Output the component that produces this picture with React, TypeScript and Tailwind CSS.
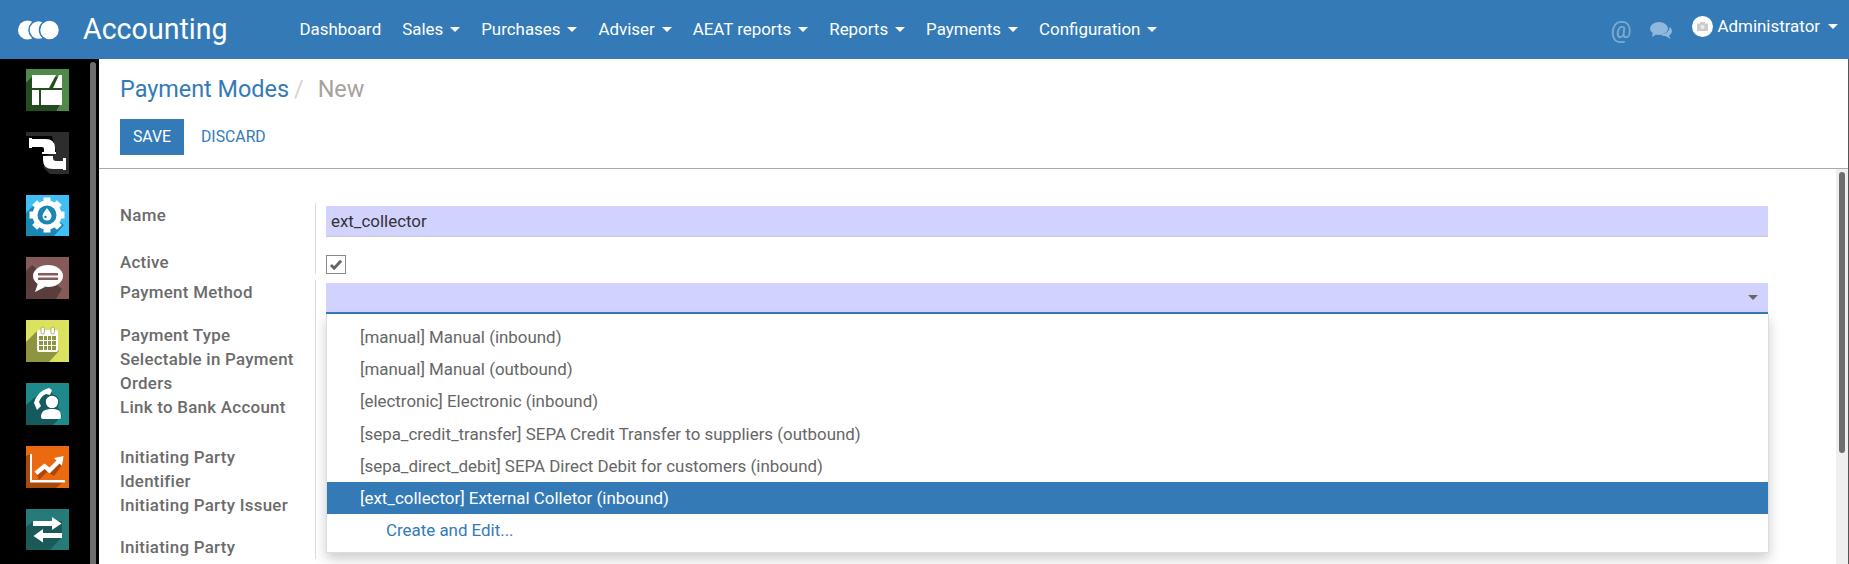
import React from "react";

const FONT = "font-['Roboto',sans-serif]";

function Caret({ className = "border-t-white" }: { className?: string }) {
  return <span className={`inline-block w-0 h-0 border-x-[5px] border-x-transparent border-t-[5px] ${className}`} />;
}

function NavItem({ label, caret = true }: { label: string; caret?: boolean }) {
  return (
    <a className="flex items-center gap-[7px] px-[10.5px] text-white text-[16.9px] whitespace-nowrap">
      <span>{label}</span>
      {caret && <Caret />}
    </a>
  );
}

function Tile({ bg, shade, children }: { bg: string; shade: string; children: React.ReactNode }) {
  return (
    <svg width="43" height="42" viewBox="0 0 43 42" className="block">
      <rect width="43" height="42" fill={bg} />
      <polygon points="6,8 6,8 36,32 30,42 0,42 0,14" fill={shade} />
      {children}
    </svg>
  );
}

function SidebarIcons() {
  return (
    <div className="flex flex-col gap-[21px] pl-[26px] pt-[10px]">
      <Tile bg="#4f8a4b" shade="#1f4a1c">
        <polygon points="0,14 6,8 36,8 36,30 30,42 0,42" fill="#234d1f" />
        <polygon points="6,6 30,6 23,19 6,19" fill="#fff" />
        <polygon points="33,6 36,6 36,19 27,19" fill="#fff" />
        <rect x="6" y="21" width="7" height="15" fill="#fff" />
        <rect x="15" y="21" width="21" height="15" fill="#fff" />
      </Tile>
      <svg width="43" height="42" viewBox="0 0 43 42" className="block">
        <rect width="43" height="42" fill="#2d2d2d" />
        <polygon points="0,4 26,4 30,20 18,24 18,36 24,42 0,42" fill="#000" />
        <path d="M5 7h15q8 0 9 8v5H18v-3q0-2-2-2H5z" fill="#fff" />
        <rect x="3" y="6" width="3" height="10" fill="#fff" />
        <rect x="16" y="20" width="14" height="2" fill="#fff" />
        <path d="M17 24h10v2q0 3 3 3h8v8H27q-10 0-10-9z" fill="#fff" />
        <rect x="37" y="26" width="3" height="12" fill="#fff" />
      </svg>
      <svg width="43" height="41" viewBox="0 0 43 41" className="block">
        <rect width="43" height="41" fill="#40bff5" />
        <polygon points="8,10 38,30 28,41 0,41 0,18" fill="#1a86b3" />
        <g fill="#fff">
          <circle cx="21" cy="20" r="14.5" />
          {[0, 45, 90, 135, 180, 225, 270, 315].map((a) => (
            <rect key={a} x="17.5" y="2.5" width="7" height="6" transform={`rotate(${a} 21 20)`} />
          ))}
        </g>
        <circle cx="21" cy="20" r="9.5" fill="#1a86b3" />
        <path d="M21 13c3 4 4.5 6 4.5 8a4.5 4.5 0 0 1-9 0c0-2 1.500-4 4.500-8z" fill="#fff" />
        <circle cx="19.500" cy="22" r="1.200" fill="#1a86b3" />
      </svg>
      <Tile bg="#875a5a" shade="#5c3d3d">
        <polygon points="7,18 20,8 37,20 18,42 0,42 0,24" fill="#5c3d3d" />
        <ellipse cx="22" cy="19" rx="15" ry="11" fill="#fff" />
        <path d="M12 26l-3 9 10-5z" fill="#fff" />
        <rect x="12" y="16" width="20" height="2.500" fill="#875a5a" />
        <rect x="12" y="20.500" width="20" height="2.500" fill="#875a5a" />
      </Tile>
      <svg width="43" height="42" viewBox="0 0 43 42" className="block">
        <rect width="43" height="42" fill="#dbe25f" />
        <polygon points="11,11 33,31 23,42 0,42 0,22" fill="#8f9440" />
        <rect x="11" y="10" width="21" height="22" rx="2" fill="#fff" />
        <rect x="13" y="16" width="17" height="14" fill="#8f9440" />
        <g fill="#fff">
          <rect x="17" y="16" width="1" height="14" /><rect x="21" y="16" width="1" height="14" /><rect x="25" y="16" width="1" height="14" />
          <rect x="13" y="20" width="17" height="1" /><rect x="13" y="25" width="17" height="1" />
        </g>
        <rect x="15" y="7" width="3.500" height="7" rx="1.700" fill="#fff" stroke="#8f9440" strokeWidth="0.700" />
        <rect x="25" y="7" width="3.500" height="7" rx="1.700" fill="#fff" stroke="#8f9440" strokeWidth="0.700" />
      </svg>
      <svg width="43" height="42" viewBox="0 0 43 42" className="block">
        <rect width="43" height="42" fill="#1f8a8c" />
        <polygon points="9,14 24,6 36,33 27,42 0,42 0,22" fill="#155a5c" />
        <path d="M26 7l-3-2q-12 3-15 15l3 7 4-4-2-4q2-6 7-8l4 1z" fill="#fff" />
        <circle cx="26" cy="19" r="6.800" fill="#fff" stroke="#155a5c" strokeWidth="1.200" />
        <path d="M15 34c0-6 4-8 11-8s9 2 9 8q0 2-2 2H17q-2 0-2-2z" fill="#fff" />
      </svg>
      <svg width="43" height="42" viewBox="0 0 43 42" className="block">
        <rect width="43" height="42" fill="#eb6a10" />
        <polygon points="4,8 6,34 37,34 37,36 30,42 0,42 0,10" fill="#a84a0c" />
        <polygon points="10,27 20,20 25,24 35,10 37,18 28,30 21,26 13,34" fill="#a84a0c" />
        <path d="M4 8h2v26h33v2.500H4z" fill="#fff" />
        <path d="M8.500 25.500l10-8 5 4 7-7-2.500-2.500 9.500-2-1.500 10-2.500-2.500-10 10-5-4.500-7 6z" fill="#fff" />
      </svg>
      <svg width="43" height="41" viewBox="0 0 43 41" className="block">
        <rect width="43" height="41" fill="#267a78" />
        <polygon points="7,12 36,12 36,28 24,41 0,41 0,18" fill="#1b5a58" />
        <path d="M7 12h19V8l9.500 6.500L26 21v-4H7z" fill="#fff" />
        <path d="M36 24H17v-4l-9.500 7 9.500 6.500V29h19z" fill="#fff" />
      </svg>
    </div>
  );
}

function Row({ label, children, className = "" }: { label: React.ReactNode; children?: React.ReactNode; className?: string }) {
  return (
    <div className={`flex ${className}`}>
      <div className="w-[195px] shrink-0 pr-[5px] text-[16.9px] leading-6 font-medium tracking-[0.28px] text-[#6b6b6b]">{label}</div>
      <div className="flex-1 border-l border-[#ddd] pl-[10px]">{children}</div>
    </div>
  );
}

const OPTIONS = [
  "[manual] Manual (inbound)",
  "[manual] Manual (outbound)",
  "[electronic] Electronic (inbound)",
  "[sepa_credit_transfer] SEPA Credit Transfer to suppliers (outbound)",
  "[sepa_direct_debit] SEPA Direct Debit for customers (inbound)",
];

function Dropdown() {
  return (
    <div className="absolute left-[326px] top-[314px] w-[1443px] bg-white border border-[#ddd] border-t-0 pt-[7px] pb-[6px] shadow-[0_6px_12px_rgba(0,0,0,0.2)] text-[16.9px] text-[#666] z-10">
      {OPTIONS.map((o) => (
        <div key={o} className="h-[32.200px] leading-[32px] pl-[33px]">{o}</div>
      ))}
      <div className="h-[32px] leading-[32px] pl-[33px] bg-[#337ab7] text-white">[ext_collector] External Colletor (inbound)</div>
      <div className="h-[32px] leading-[32px] pl-[59px] text-[#337ab7]">Create and Edit...</div>
    </div>
  );
}

export default function App() {
  return (
    <div className={`${FONT} relative w-[1849px] h-[564px] overflow-hidden bg-white`}>
      <header className="h-[59px] bg-[#337ab7] flex items-center text-white">
        <svg width="42" height="20" viewBox="0 0 42 20" className="ml-[18px] shrink-0">
          <circle cx="9.500" cy="10" r="9.500" fill="#fff" />
          <circle cx="20.500" cy="10" r="9.500" fill="#fff" stroke="#337ab7" strokeWidth="1.500" />
          <circle cx="31.500" cy="10" r="10" fill="#fff" stroke="#337ab7" strokeWidth="1.500" />
        </svg>
        <div className="ml-[23px] w-[144px] text-[28.6px] leading-none whitespace-nowrap">Accounting</div>
        <nav className="flex ml-[62px]">
          <NavItem label="Dashboard" caret={false} />
          <NavItem label="Sales" />
          <NavItem label="Purchases" />
          <NavItem label="Adviser" />
          <NavItem label="AEAT reports" />
          <NavItem label="Reports" />
          <NavItem label="Payments" />
          <NavItem label="Configuration" />
        </nav>
        <div className="ml-auto flex items-center pr-[11px]">
          <span className="text-[23.4px] text-white/40 mr-[18px] mt-[2px] leading-none">@</span>
          <svg width="22" height="18" viewBox="0 0 22 18" className="mr-[20px] mt-[3px]">
            <ellipse cx="9" cy="6.500" rx="9" ry="6.500" fill="#8fb8dc" />
            <path d="M3 10l-1 5 5-3z" fill="#8fb8dc" />
            <path d="M19.500 5c1.500 1 2.500 2.500 2.500 4 0 2-1.500 3.500-3 4.500l1.500 3.500-5-3c-2 0-4-.5-5-1.500 5 0 9-3 9-7.500z" fill="#8fb8dc" />
          </svg>
          <div className="w-[21px] h-[21px] rounded-full bg-white flex items-center justify-center mr-[5px] mb-[6px]">
            <svg width="11" height="9" viewBox="0 0 11 9"><rect y="1.500" width="11" height="7.500" fill="#ccc" /><rect x="3" width="5" height="2" fill="#ccc" /><circle cx="5.500" cy="5" r="2" fill="#eee" /></svg>
          </div>
          <div className="flex items-center gap-[8px] text-[16.9px] mb-[6px]">
            <span>Administrator</span>
            <Caret />
          </div>
        </div>
      </header>
      <div className="flex h-[505px]">
        <aside className="relative w-[99px] shrink-0 bg-black">
          <SidebarIcons />
          <div className="absolute left-[90px] top-[3px] bottom-0 w-[6px] bg-[#6e6e6e] rounded-t-[3px]" />
        </aside>
        <main className="flex-1 min-w-0 flex flex-col border-r border-[#555]">
          <div className="h-[110px] shrink-0 border-b border-[#aaa] pl-[21px]">
            <div className="h-[60px] pt-[15px] text-[23.4px] leading-[30px] whitespace-nowrap">
              <span className="text-[#337ab7]">Payment Modes</span>
              <span className="text-[#d9d2cc] ml-[5px]">/</span>
              <span className="text-[#a8a29e] ml-[14px]">New</span>
            </div>
            <div className="flex items-center">
              <button className="w-[64px] h-[36px] bg-[#337ab7] text-white text-[15.8px]">SAVE</button>
              <button className="ml-[17px] text-[#337ab7] text-[15.8px]">DISCARD</button>
            </div>
          </div>
          <div className="flex-1 min-h-0 flex">
            <div className="flex-1 min-w-0 overflow-hidden pl-[21px] pr-[68px] pt-[34px]">
              <Row label="Name">
                <div className="h-[31px] bg-[#d2d2ff] border-b border-[#ccc] text-[16.9px] text-[#333] leading-[30px] pl-[5px] mt-[3px] mb-[13px]">ext_collector</div>
              </Row>
              <Row label="Active">
                <div className="h-[24px] pt-[5px]">
                  <div className="w-[20px] h-[19px] border border-[#888] flex items-center justify-center">
                    <svg width="14" height="11" viewBox="0 0 14 12"><path d="M1.500 6.500l3.500 3.500 7.500-8" fill="none" stroke="#666" strokeWidth="3.200" /></svg>
                  </div>
                </div>
              </Row>
              <Row label="Payment Method" className="mt-[6px]">
                <div className="mt-[3px] h-[31px] bg-[#d2d2ff] border-b-2 border-[#337ab7] flex items-center justify-end pr-[10px]">
                  <Caret className="border-t-[#666]" />
                </div>
              </Row>
              <Row label={<div className="pt-[9px]">Payment Type<br />Selectable in Payment<br />Orders<br />Link to Bank Account<div className="h-[26px]" />Initiating Party<br />Identifier<br />Initiating Party Issuer<div className="h-[18px]" />Initiating Party</div>} />
            </div>
            <div className="w-[12px] shrink-0 bg-[#f0eeee] pl-[3px] pt-[3px]">
              <div className="h-[281px] w-[6px] bg-[#6e6e6e] rounded-[3px]" />
            </div>
          </div>
        </main>
      </div>
      <Dropdown />
    </div>
  );
}
